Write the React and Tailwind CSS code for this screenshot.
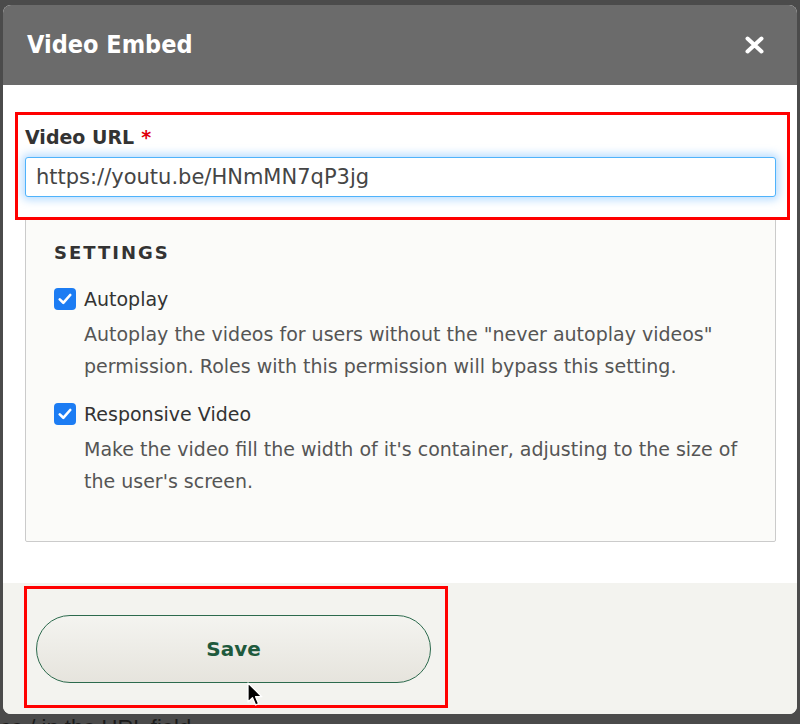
import { useState } from 'react';

const font = { fontFamily: '"DejaVu Sans", "Liberation Sans", sans-serif' };

function Check({ checked, onChange }) {
  return (
    <button
      type="button"
      onClick={onChange}
      className={`flex h-[22px] w-[22px] shrink-0 items-center justify-center rounded-[4px] ${checked ? 'bg-[#1c7cf3]' : 'border border-[#999] bg-white'}`}
    >
      {checked && (
        <svg width="14" height="12" viewBox="0 0 14 12" fill="none">
          <path d="M1.8 6.4 L5.3 9.8 L12.2 2" stroke="white" strokeWidth="2.6" strokeLinecap="round" strokeLinejoin="round" />
        </svg>
      )}
    </button>
  );
}

function Option({ label, description, checked, onChange, className }) {
  return (
    <div className={className}>
      <label className="flex cursor-pointer items-center gap-[8px] text-[19px] leading-[28px] text-[#333]">
        <Check checked={checked} onChange={onChange} />
        <span>{label}</span>
      </label>
      <p className="mt-[5px] pl-[30px] pr-[26px] text-[19px] leading-[32px] text-[#555]">{description}</p>
    </div>
  );
}

export default function App() {
  const [url, setUrl] = useState('https://youtu.be/HNmMN7qP3jg');
  const [autoplay, setAutoplay] = useState(true);
  const [responsive, setResponsive] = useState(true);

  return (
    <div className="h-[724px] overflow-hidden bg-[#4b4b4b] px-[3px] pt-[5px]" style={font}>
      <div className="flex flex-col overflow-hidden rounded-[8px] bg-white">
        {/* title bar */}
        <div className="flex h-[80px] items-center justify-between bg-[#6b6b6b] pl-[24px] pr-[33px]">
          <h1
            className="text-[25px] font-bold text-white"
            style={{ fontFamily: '"DejaVu Sans Condensed", "DejaVu Sans", sans-serif' }}
          >
            Video Embed
          </h1>
          <button type="button" aria-label="Close">
            <svg width="19" height="18" viewBox="0 0 19 18">
              <path d="M2.5 2.5 L16.5 15.5 M16.5 2.5 L2.5 15.5" stroke="white" strokeWidth="4" strokeLinecap="round" />
            </svg>
          </button>
        </div>

        {/* body */}
        <div className="pb-[41px] pl-[22px] pr-[21px] pt-[38px]">
          <div className="relative">
            <label className="flex items-center text-[19px] font-bold leading-[28px] text-[#333]">
              Video URL
              <span className="ml-[7px] text-[#e0000b]">*</span>
            </label>
            <input
              value={url}
              onChange={(e) => setUrl(e.target.value)}
              className="mt-[6px] block h-[40px] w-full rounded-[3px] border border-[#4fb3fb] bg-white px-[10px] text-[21px] text-[#454545] shadow-[0_0_8px_3px_rgba(80,170,255,0.4)] outline-none"
            />
            <div className="pointer-events-none absolute -bottom-[23px] -left-[10px] -right-[14px] -top-[11px] border-[3px] border-[#f00]" />
          </div>

          <div className="mt-[21px] rounded-[2px] border border-[#cbcbcb] bg-[#fbfbf9] pb-[44px] pl-[28px] pr-[2px] pt-[20px]">
            <div className="text-[18px] font-bold uppercase leading-[27px] tracking-[2px] text-[#333]">Settings</div>
            <Option
              className="mt-[19px]"
              label="Autoplay"
              checked={autoplay}
              onChange={() => setAutoplay(!autoplay)}
              description={'Autoplay the videos for users without the "never autoplay videos" permission. Roles with this permission will bypass this setting.'}
            />
            <Option
              className="mt-[18px]"
              label="Responsive Video"
              checked={responsive}
              onChange={() => setResponsive(!responsive)}
              description="Make the video fill the width of it's container, adjusting to the size of the user's screen."
            />
          </div>
        </div>

        {/* footer */}
        <div className="bg-[#f3f3ef] pb-[31px] pl-[33px] pt-[32px]">
          <div className="relative w-[395px]">
            <button
              type="button"
              className="h-[68px] w-full rounded-full border-[1.5px] border-[#2c6a4d] bg-gradient-to-b from-[#f4f4f0] to-[#e6e4dd] text-[20px] font-bold text-[#1f5a3d]"
            >
              Save
            </button>
            <div className="pointer-events-none absolute -bottom-[25px] -left-[12px] -right-[17px] -top-[29px] border-[3px] border-[#f00]" />
            <svg className="pointer-events-none absolute left-[211px] top-[67px]" width="17" height="26" viewBox="0 0 17 26">
              <path d="M1 1 L1 20 L5.5 15.8 L8.6 23 L11.6 21.7 L8.6 14.7 L14.8 14.7 Z" fill="black" stroke="white" strokeWidth="1.3" strokeLinejoin="round" />
            </svg>
          </div>
        </div>
      </div>
      <div
        className="-ml-[3px] mt-[2px] whitespace-nowrap text-[22px] leading-[24px] text-[#1b1b1b]"
        style={{ fontFamily: '"Liberation Sans", sans-serif' }}
      >
        ce / in the URL field
      </div>
    </div>
  );
}
